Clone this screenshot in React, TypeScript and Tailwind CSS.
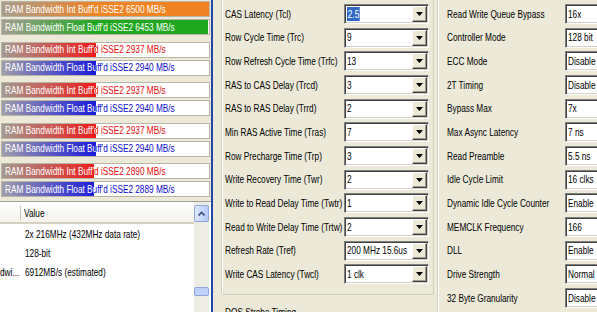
import { ReactNode } from 'react'

type Kind = 'orange' | 'green' | 'red' | 'blue'

const kinds: Record<Kind, { fill: string; text: string }> = {
  orange: { fill: 'bg-[linear-gradient(to_right,#a89d8e_0px,#f08323_95px)]', text: 'text-[#e06a10]' },
  green: { fill: 'bg-[linear-gradient(to_right,#a39f92_0px,#1fa81f_95px)]', text: 'text-[#108a10]' },
  red: { fill: 'bg-[linear-gradient(to_right,#a39a90_0px,#ee1c1c_92px)]', text: 'text-[#e60c0c]' },
  blue: { fill: 'bg-[linear-gradient(to_right,#a09eaa_0px,#1c1cdc_92px)]', text: 'text-[#0c0cd0]' },
}

const pairs: { label: string; value: number; kind: Kind }[][] = [
  [
    { label: "RAM Bandwidth Int Buff'd iSSE2 6500 MB/s", value: 6500, kind: 'orange' },
    { label: "RAM Bandwidth Float Buff'd iSSE2 6453 MB/s", value: 6453, kind: 'green' },
  ],
  [
    { label: "RAM Bandwidth Int Buff'd iSSE2 2937 MB/s", value: 2937, kind: 'red' },
    { label: "RAM Bandwidth Float Buff'd iSSE2 2940 MB/s", value: 2940, kind: 'blue' },
  ],
  [
    { label: "RAM Bandwidth Int Buff'd iSSE2 2937 MB/s", value: 2937, kind: 'red' },
    { label: "RAM Bandwidth Float Buff'd iSSE2 2940 MB/s", value: 2940, kind: 'blue' },
  ],
  [
    { label: "RAM Bandwidth Int Buff'd iSSE2 2937 MB/s", value: 2937, kind: 'red' },
    { label: "RAM Bandwidth Float Buff'd iSSE2 2940 MB/s", value: 2940, kind: 'blue' },
  ],
  [
    { label: "RAM Bandwidth Int Buff'd iSSE2 2890 MB/s", value: 2890, kind: 'red' },
    { label: "RAM Bandwidth Float Buff'd iSSE2 2889 MB/s", value: 2889, kind: 'blue' },
  ],
]

const timings: [string, string][] = [
  ['CAS Latency (Tcl)', '2.5'],
  ['Row Cycle Time (Trc)', '9'],
  ['Row Refresh Cycle Time (Trfc)', '13'],
  ['RAS to CAS Delay (Trcd)', '3'],
  ['RAS to RAS Delay (Trrd)', '2'],
  ['Min RAS Active Time (Tras)', '7'],
  ['Row Precharge Time (Trp)', '3'],
  ['Write Recovery Time (Twr)', '2'],
  ['Write to Read Delay Time (Twtr)', '1'],
  ['Read to Write Delay Time (Trtw)', '2'],
  ['Refresh Rate (Tref)', '200 MHz 15.6us'],
  ['Write CAS Latency (Twcl)', '1 clk'],
]

const controller: [string, string][] = [
  ['Read Write Queue Bypass', '16x'],
  ['Controller Mode', '128 bit'],
  ['ECC Mode', 'Disable'],
  ['2T Timing', 'Disable'],
  ['Bypass Max', '7x'],
  ['Max Async Latency', '7 ns'],
  ['Read Preamble', '5.5 ns'],
  ['Idle Cycle Limit', '16 clks'],
  ['Dynamic Idle Cycle Counter', 'Enable'],
  ['MEMCLK Frequency', '166'],
  ['DLL', 'Enable'],
  ['Drive Strength', 'Normal'],
  ['32 Byte Granularity', 'Disable'],
]

// the screenshot's Tahoma is squeezed horizontally
function T({ children, className = '' }: { children: ReactNode; className?: string }) {
  return <span className={`inline-block origin-left scale-x-[0.75] whitespace-nowrap ${className}`}>{children}</span>
}

function Bar({ label, value, kind }: { label: string; value: number; kind: Kind }) {
  const k = kinds[kind]
  const width = Math.round((207 * value) / 6500)
  return (
    <div className="relative h-[16px] w-[209px] border border-[#b8b5a6] bg-white">
      <div className={`flex h-full items-center pl-[3px] ${k.text}`}>
        <T>{label}</T>
      </div>
      {/* filled part, white text clipped to the bar */}
      <div className={`absolute bottom-0 left-0 top-0 overflow-hidden ${k.fill}`} style={{ width }}>
        <div className="flex h-full items-center pl-[3px] text-white">
          <T>{label}</T>
        </div>
      </div>
    </div>
  )
}

function DropButton() {
  return (
    <div className="flex h-full w-[15px] shrink-0 items-center justify-center border border-t-white border-l-white border-b-[#404040] border-r-[#404040] bg-[#ece9d8] shadow-[inset_-1px_-1px_0_#9d9a8c]">
      <svg width="7" height="4" viewBox="0 0 7 4">
        <path d="M0 0h7L3.5 4z" fill="#000" />
      </svg>
    </div>
  )
}

function Field({ children, button = true, className = '' }: { children: ReactNode; button?: boolean; className?: string }) {
  return (
    <div
      className={`flex h-[20px] items-center border border-t-[#808080] border-l-[#808080] border-b-white border-r-white bg-white shadow-[inset_1px_1px_0_#404040,inset_-1px_-1px_0_#d4d0c8] ${className}`}
    >
      <div className="flex-1 overflow-hidden whitespace-nowrap pl-[2px]">{children}</div>
      {button && (
        <div className="h-full py-[1px] pr-[1px]">
          <DropButton />
        </div>
      )}
    </div>
  )
}

export default function App() {
  return (
    <div className="flex h-[312px] w-[597px] overflow-hidden bg-[#ece9d8] font-['Liberation_Sans',Arial,sans-serif] text-[11px] text-black">
      {/* Left: benchmark bars + info list */}
      <div className="flex w-[211px] shrink-0 flex-col">
        <div className="flex flex-col gap-[6.5px] pl-[1px] pt-[1px]">
          {pairs.map((pair, i) => (
            <div key={i} className="flex flex-col gap-[2px]">
              {pair.map((b, j) => (
                <Bar key={j} {...b} />
              ))}
            </div>
          ))}
        </div>

        <div className="mt-[4px] flex flex-1 border-t border-[#a5a294] bg-white pr-[2px]">
          <div className="flex min-w-0 flex-1 flex-col overflow-hidden">
            <div className="flex h-[22px] items-center border-b-2 border-[#d6d2c2] bg-[linear-gradient(#ffffff,#f3f2eb)] pt-[2px]">
              <div className="h-[14px] w-[21px] border-r border-[#c7c5b2]" />
              <T className="pl-[4px]">Value</T>
            </div>
            <div className="flex flex-col pt-[1px]">
              {[
                ['', '2x 216MHz (432MHz data rate)'],
                ['', '128-bit'],
                ['dwi...', '6912MB/s (estimated)'],
              ].map(([a, b], i) => (
                <div key={i} className="flex h-[19px] items-center">
                  <div className="w-[25px] shrink-0 overflow-hidden">
                    <T>{a}</T>
                  </div>
                  <T>{b}</T>
                </div>
              ))}
            </div>
          </div>
          {/* scrollbar */}
          <div className="flex w-[15px] shrink-0 flex-col bg-[#eeede5] pt-[3px]">
            <div className="flex h-[17px] items-center justify-center rounded-[2px] border border-[#8ea6d9] bg-[linear-gradient(to_right,#dfe8fe,#b6cbf9)]">
              <svg width="7" height="5" viewBox="0 0 7 5">
                <path d="M0.5 4.5L3.5 1.5L6.5 4.5" stroke="#3d5180" strokeWidth="1.6" fill="none" />
              </svg>
            </div>
            <div className="mt-[65px] h-[9px] rounded-[2px] border border-[#8ea6d9] bg-[#c0d1fa]" />
          </div>
        </div>
      </div>

      {/* splitter */}
      <div className="w-[2px] shrink-0 bg-[#2049a6]" />

      {/* Middle: DRAM timings */}
      <div className="flex w-[224px] shrink-0 flex-col pl-[8px]">
        <div className="w-[213px] rounded-b-[3px] border-x border-b border-[#d0d0bf] pb-[8px] pt-[2px] shadow-[inset_1px_0_0_#fff]">
          {timings.map(([label, value], i) => (
            <div key={label} className="flex h-[23.7px] items-center pl-[3px] pr-[4px]">
              <div className="w-[119px] shrink-0">
                <T>{label}</T>
              </div>
              <Field className="w-[85px]">
                {i === 0 ? <T className="bg-[#316ac5] px-[1px] leading-[14px] text-white">{value}</T> : <T>{value}</T>}
              </Field>
            </div>
          ))}
        </div>
        <div className="pl-[4px] pt-[9px]">
          <T>DQS Strobe Timing</T>
        </div>
      </div>

      {/* Right: memory controller */}
      <div className="flex flex-1 flex-col">
        <div className="h-full border-l border-[#d0d0bf] pt-[2px] shadow-[inset_1px_0_0_#fff]">
          {controller.map(([label, value]) => (
            <div key={label} className="flex h-[23.7px] items-center pl-[9px]">
              <div className="w-[118px] shrink-0">
                <T>{label}</T>
              </div>
              <Field button={false} className="w-[60px] shrink-0">
                <T>{value}</T>
              </Field>
            </div>
          ))}
        </div>
      </div>
    </div>
  )
}
